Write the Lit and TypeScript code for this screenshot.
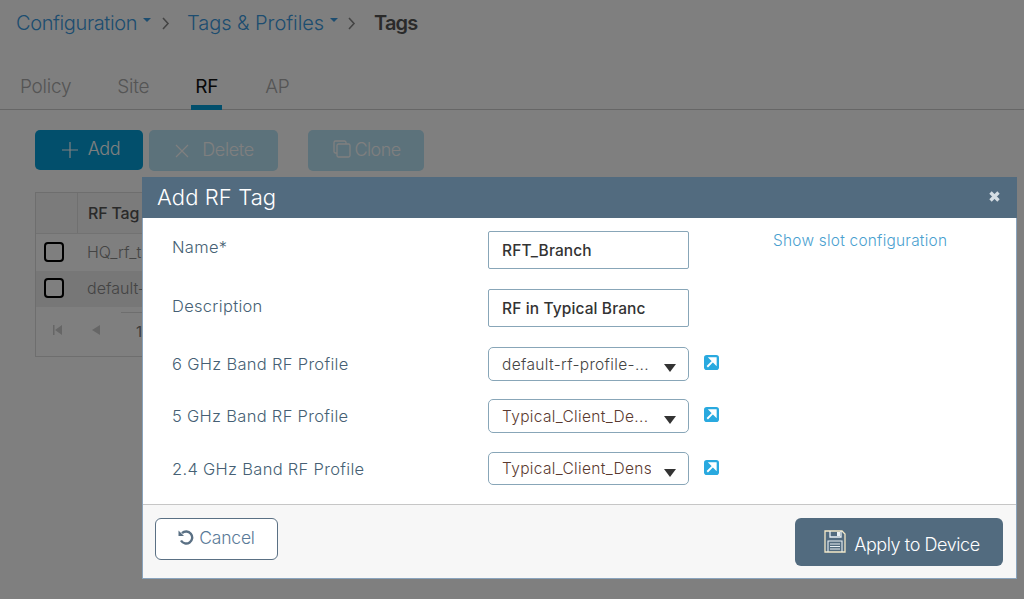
import { LitElement, html, css, svg } from "lit";
import { customElement } from "lit/decorators.js";

const FONT = css`Inter, "Liberation Sans", sans-serif`;

@customElement("app-root")
export class AppRoot extends LitElement {
  static styles = css`
    :host { display: block; position: relative; width: 1024px; height: 599px; overflow: hidden; background: #fff; font-family: ${FONT}; color: #444; }
    * { box-sizing: border-box; }
    .page { display: flex; flex-direction: column; }
    .crumbs { display: flex; align-items: center; height: 46px; padding-left: 16px; font-size: 20px; letter-spacing: -0.38px; font-weight: 300; }
    .crumb { color: #3a9ae0; }
    .caret { width: 0; height: 0; border: 4px solid transparent; border-top-color: #3a9ae0; border-bottom: 0; margin: 0 0 7px 6px; }
    .chev { margin: 0 0 0 11px; display: block; }
    .crumb.second { margin-left: 17px; letter-spacing: -0.05px; }
    .chev.b { margin-left: 10px; }
    .crumb.last { margin-left: 18px; color: #555; font-weight: 600; letter-spacing: -0.9px; }
    .tabs { display: flex; height: 46px; margin-top: 18px; border-bottom: 1px solid #ccc; padding-left: 16px; font-size: 19px; letter-spacing: -0.25px; color: #aaa; font-weight: 300; }
    .tab { padding: 11px 4px 0; height: 46px; }
    .tab + .tab { margin-left: 38px; }
    .tab:nth-child(4) { margin-left: 39px; }
    .tab.on { color: #111; font-weight: 400; border-bottom: 5px solid #049fd9; padding-top: 11px; }
    .tools { display: flex; padding: 20px 0 0 35px; gap: 6px; align-items: flex-start; }
    .tool { display: flex; align-items: center; justify-content: center; height: 41px; border-radius: 5px; background: #b8e4f6; color: #fff; font-size: 18px; letter-spacing: -0.35px; gap: 8px; padding-bottom: 3px; font-weight: 300; }
    .tool svg { margin-top: 3px; }
    .tool.add { width: 108px; height: 40px; background: #049fd9; color: #fff; padding-left: 3px; gap: 9px; }
    .tool.del { width: 129px; gap: 12px; padding-left: 1px; }
    .tool.clone { width: 116px; margin-left: 24px; gap: 3px; letter-spacing: -0.6px; }
    .tool.clone svg { margin-top: -1px; }
    .table { margin: 21px 0 0 35px; width: 330px; height: 165px; border: 1px solid #ddd; font-size: 16px; }
    .thead { display: flex; height: 41px; background: #f6f6f6; border-bottom: 1px solid #e4e4e4; }
    .thead .c0 { width: 42px; border-right: 1px solid #e0e0e0; }
    .thead .c1 { padding: 10px 0 0 10px; font-weight: 500; color: #555; font-size: 16px; letter-spacing: -0.2px; }
    .row { display: flex; align-items: center; height: 37px; color: #888; padding-bottom: 1px; font-weight: 300; }
    .row.alt { height: 36px; background: #eee; padding-bottom: 3px; }
    .check { width: 20px; height: 20px; border: 2px solid #000; border-radius: 4px; margin: 0 23px 0 8px; background: #fff; }
    .pager { display: flex; align-items: center; padding: 5px 0 0 15px; color: #777; font-size: 15px; }
    .pager svg:nth-child(2) { margin-left: 28px; }
    .num { margin-left: 20px; border-top: 1px solid #ddd; padding: 9px 0 0 15px; width: 60px; height: 36px; }

    .overlay { position: absolute; inset: 0; background: rgba(0,0,0,.5); }
    .dialog { position: absolute; left: 142px; top: 177px; width: 875px; height: 402px; background: #fff; display: flex; flex-direction: column; border: 1px solid #8aa4bd; border-top: 0; }
    .head { height: 41px; margin: 0 -1px; background: #526b7f; color: #fff; font-size: 22px; letter-spacing: 0.1px; font-weight: 350; display: flex; align-items: center; justify-content: space-between; padding: 0 16px 2px 15px; }
    .x { display: block; }
    .body { flex: 1; display: grid; grid-template-columns: 316px 201px 84px 1fr; grid-template-rows: 58px 58px 52px 53px 33px; padding: 13px 0 0 29px; font-size: 16.5px; color: #465f74; letter-spacing: 0.3px; font-weight: 350; }
    .lab { padding-top: 6px; }
    .lab.sel { padding-top: 7px; }
    .lab.d { padding-top: 7px; }
    .input { height: 38px; border: 1px solid #88a6b8; border-radius: 2px; padding: 0 13px; display: flex; align-items: center; color: #333; font-size: 15.5px; letter-spacing: 0.12px; font-weight: 500; overflow: hidden; white-space: nowrap; }
    .select { height: 34px; border: 1px solid #88a6b8; border-radius: 5px; padding: 0 13px; display: flex; align-items: center; position: relative; color: #444; font-size: 15.5px; letter-spacing: 0.34px; font-weight: 350; }
    .select.short { height: 33px; }
    .select span { display: block; width: 149px; overflow: hidden; white-space: nowrap; }
    .select .t { color: #5a3a30; }
    .select i { position: absolute; right: 12px; top: 16px; border: 6px solid transparent; border-top: 8px solid #333; border-bottom: 0; }
    .link { padding: 8px 0 0 15px; }
    .link svg { display: block; }
    .slot { color: #4a9fcf; font-size: 15.4px; letter-spacing: 0.25px; white-space: nowrap; font-weight: 300; }
    .foot { height: 74px; background: #f7f7f7; border-top: 1px solid #c6c6c6; display: flex; justify-content: space-between; align-items: flex-start; padding: 13px 13px 0 12px; }
    .btn { display: flex; align-items: center; justify-content: center; border-radius: 6px; font-weight: 300; }
    .cancel { width: 123px; height: 42px; background: #fff; border: 1px solid #5a7084; color: #5a7a98; font-size: 17.5px; gap: 5px; letter-spacing: -0.2px; padding: 0 1px 4px 0; }
    .apply { width: 208px; height: 48px; background: #526b7f; color: #fff; font-size: 18px; gap: 8px; letter-spacing: -0.42px; padding: 4px 0 0 6px; font-weight: 350; }
    .apply svg { margin-top: -5px; }
  `;

  private link() {
    return html`<div class="link"><svg width="15" height="15" viewBox="0 0 16 16"><rect width="16" height="16" rx="3" fill="#29a9df"/><path d="M3.5 12.5 L10 6 M6.5 3.5 H12.5 V9.5 Z" stroke="#fff" stroke-width="2" fill="#fff"/></svg></div>`;
  }

  render() {
    const chev = svg`<path d="M1 1 L6 6.5 L1 12" fill="none" stroke="currentColor" stroke-width="1.6"/>`;
    return html`
      <div class="page">
        <div class="crumbs">
          <span class="crumb">Configuration</span><span class="caret"></span>
          <svg class="chev" width="8" height="13" style="color:#888">${chev}</svg>
          <span class="crumb second">Tags &amp; Profiles</span><span class="caret"></span>
          <svg class="chev b" width="8" height="13" style="color:#888">${chev}</svg>
          <span class="crumb last">Tags</span>
        </div>
        <div class="tabs">
          <div class="tab">Policy</div><div class="tab">Site</div><div class="tab on">RF</div><div class="tab">AP</div>
        </div>
        <div class="tools">
          <div class="tool add"><svg width="18" height="18" viewBox="0 0 18 18"><path d="M9 1V17M1 9H17" stroke="#fff" stroke-width="1.2"/></svg>Add</div>
          <div class="tool del"><svg width="16" height="16" viewBox="0 0 16 16"><path d="M2 2L14 14M14 2L2 14" stroke="#fff" stroke-width="1.2"/></svg>Delete</div>
          <div class="tool clone"><svg width="20" height="20" viewBox="0 0 20 20" fill="none" stroke="#fff" stroke-width="1.3"><rect x="5" y="5" width="13" height="13" rx="1.5"/><path d="M5 14H3.5A1.5 1.5 0 0 1 2 12.5V3.5A1.5 1.5 0 0 1 3.5 2H12.5A1.5 1.5 0 0 1 14 3.5V5"/></svg>Clone</div>
        </div>
        <div class="table">
          <div class="thead"><div class="c0"></div><div class="c1">RF Tag</div></div>
          <div class="row"><span class="check"></span>HQ_rf_tag</div>
          <div class="row alt"><span class="check"></span>default-rf</div>
          <div class="pager">
            <svg width="12" height="12" viewBox="0 0 12 12" fill="#ccc"><path d="M2 1H3.5V11H2ZM11 1V11L4 6Z"/></svg>
            <svg width="10" height="12" viewBox="0 0 10 12" fill="#ccc"><path d="M9 1V11L1 6Z"/></svg>
            <span class="num">1</span>
          </div>
        </div>
      </div>
      <div class="overlay"></div>
      <div class="dialog">
        <div class="head">Add RF Tag
          <svg class="x" width="13" height="13" viewBox="0 0 13 13"><path d="M2.5 2.5L10.5 10.5M10.5 2.5L2.5 10.5" stroke="#d5dde3" stroke-width="3.4"/></svg>
        </div>
        <div class="body">
          <div class="lab">Name*</div><div class="input">RFT_Branch</div><div></div><div class="slot">Show slot configuration</div>
          <div class="lab d">Description</div><div class="input">RF in Typical Branc</div><div></div><div></div>
          <div class="lab sel">6 GHz Band RF Profile</div><div class="select"><span>default-rf-profile-...</span><i></i></div>${this.link()}<div></div>
          <div class="lab sel">5 GHz Band RF Profile</div><div class="select"><span class="t">Typical_Client_De...</span><i></i></div>${this.link()}<div></div>
          <div class="lab sel">2.4 GHz Band RF Profile</div><div class="select short"><span class="t">Typical_Client_Dens</span><i></i></div>${this.link()}<div></div>
        </div>
        <div class="foot">
          <div class="btn cancel"><svg width="17" height="16" viewBox="0 0 17 16" fill="none"><path d="M5 4.2A6 6 0 1 1 4 11.5" stroke="#5a7084" stroke-width="2.4"/><path d="M1.5 1.5V7H7Z" fill="#5a7084"/></svg>Cancel</div>
          <div class="btn apply"><svg width="22" height="23" viewBox="0 0 22 23" fill="none"><path d="M1 1H18L21 4V22H1Z" stroke="#f4e9c8" stroke-width="1.3"/><path d="M6 1V7H17V1" stroke="#e9f0f4" stroke-width="1.3"/><rect x="13" y="2" width="3" height="4" fill="#e9f0f4"/><path d="M4 22V11H18V22M6 14H16M6 16.5H16M6 19H16" stroke="#e9f0f4" stroke-width="1.1"/></svg>Apply to Device</div>
        </div>
      </div>
    `;
  }
}
